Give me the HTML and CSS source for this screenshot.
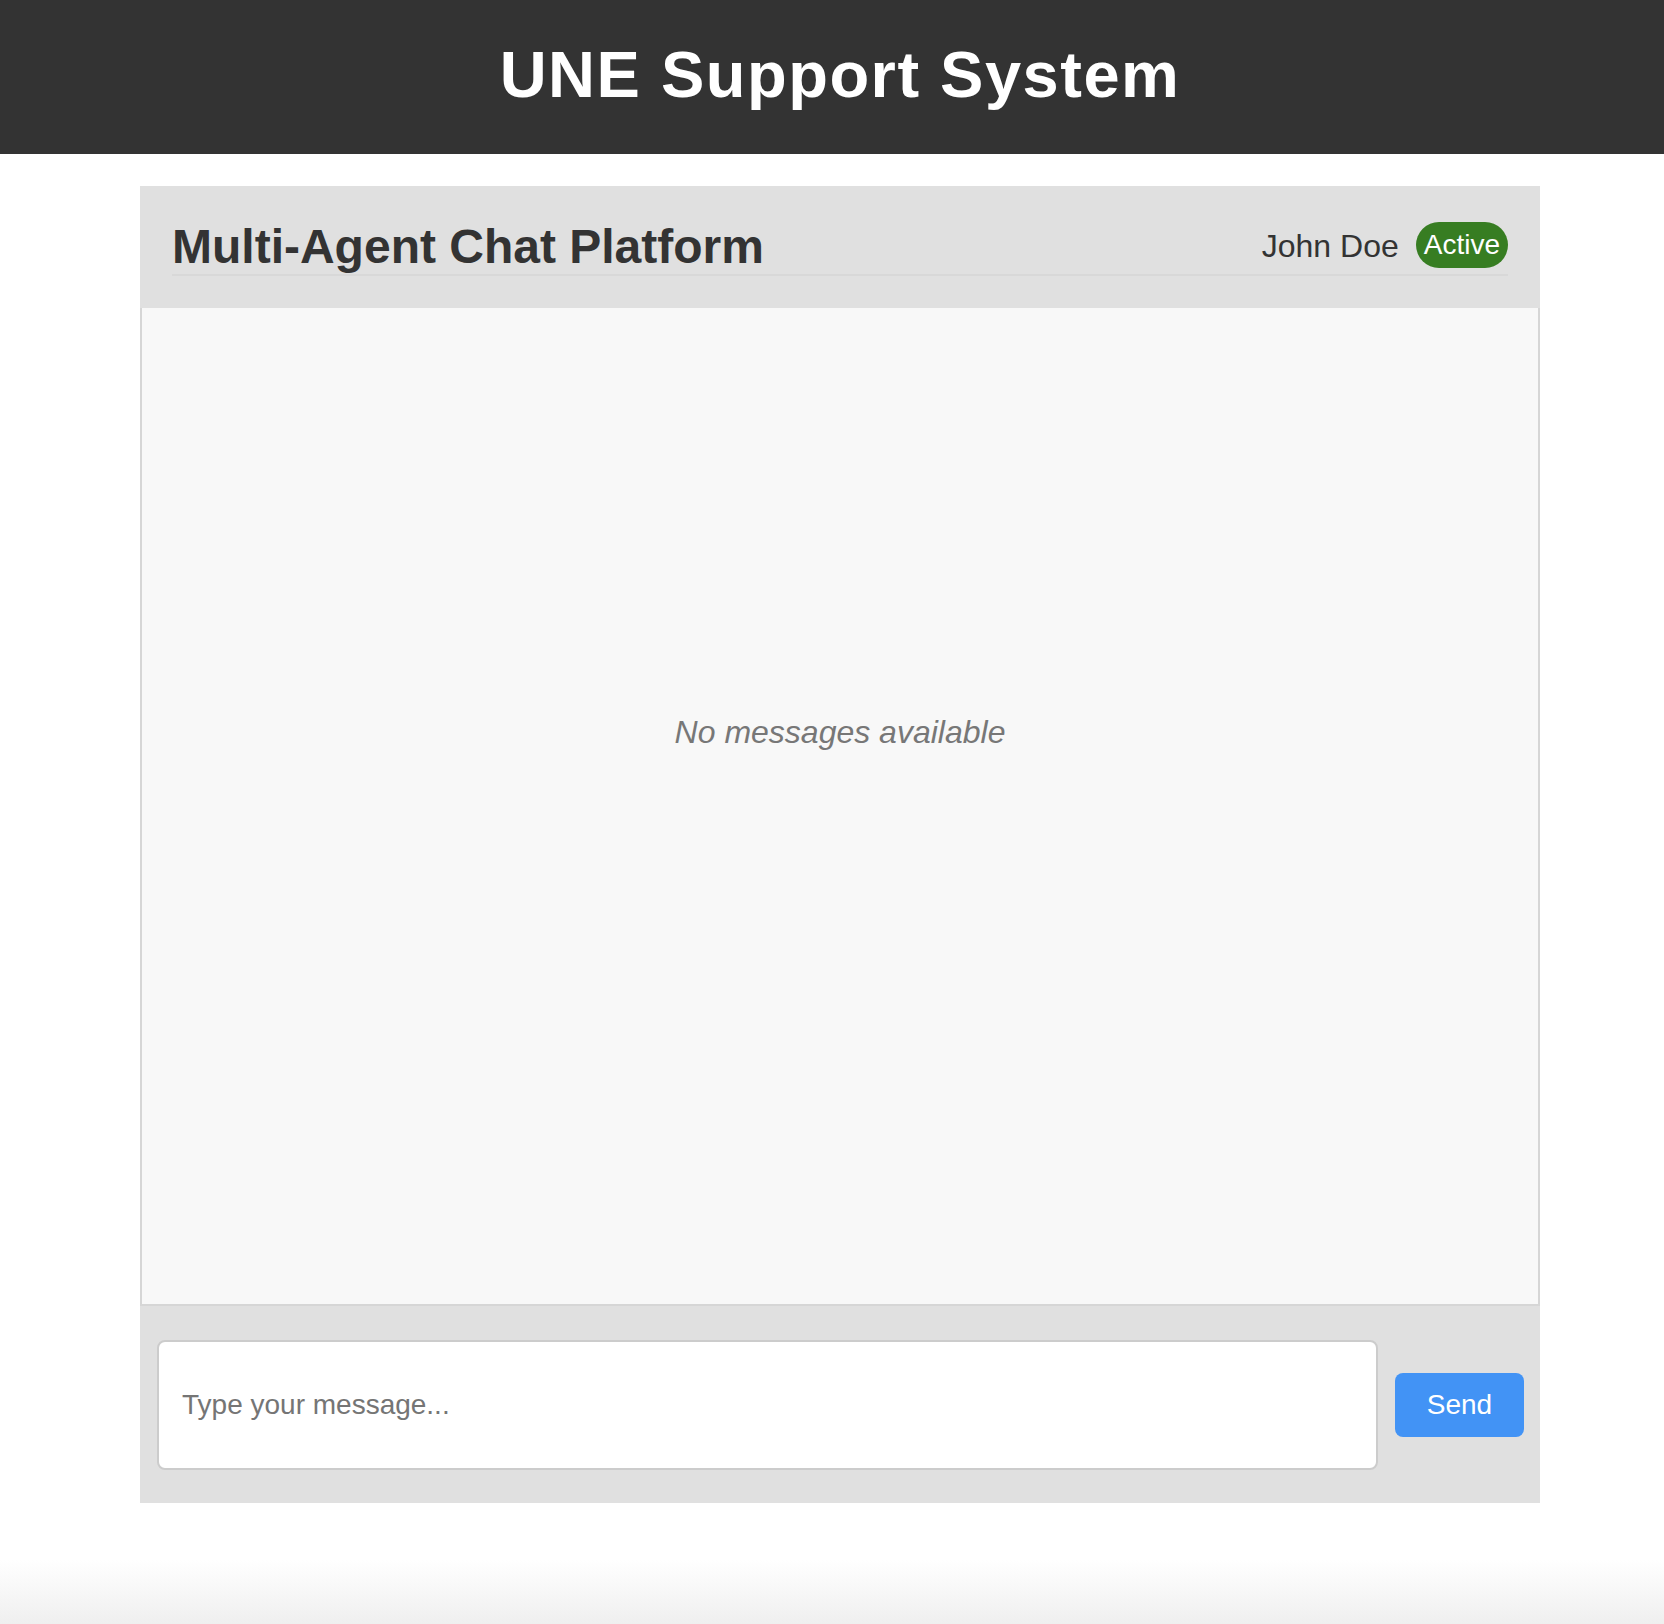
FILE: index.html
```html
<!DOCTYPE html>
<html lang="en">
<head>
<meta charset="utf-8">
<title>UNE Support System</title>
<link rel="stylesheet" href="styles.css">
</head>
<body>
<header class="site-header">
  <h1 class="site-title">UNE Support System</h1>
</header>
<main class="chat">
  <div class="chat-header">
    <div class="chat-header-row">
      <h2 class="chat-title">Multi-Agent Chat Platform</h2>
      <div class="user">
        <span class="user-name">John Doe</span>
        <span class="status">Active</span>
      </div>
    </div>
  </div>
  <section class="messages">
    <p class="empty">No messages available</p>
  </section>
  <form class="composer">
    <input class="composer-input" type="text" placeholder="Type your message...">
    <button class="send" type="button">Send</button>
  </form>
</main>
</body>
</html>
```

FILE: styles.css
```css
html {
  min-height: 100%;
  background: linear-gradient(to bottom, #ffffff 0, #ffffff 1560px, #efefef 1624px);
}
body {
  margin: 0;
  min-height: 1624px;
  font-family: "Liberation Sans", Arial, Helvetica, sans-serif;
  color: #333333;
}
.site-header {
  background: #333333;
  height: 154px;
  box-sizing: border-box;
  padding-top: 37px;
}
.site-title {
  margin: 0;
  padding-left: 16px;
  text-align: center;
  color: #ffffff;
  font-size: 65px;
  line-height: 75px;
  letter-spacing: 1.5px;
  font-weight: 700;
}
.chat {
  width: 1400px;
  margin: 32px 0 0 140px;
  background: #e0e0e0;
}
.chat-header {
  padding: 33px 32px 32px 32px;
}
.chat-header-row {
  display: flex;
  align-items: center;
  justify-content: space-between;
  border-bottom: 2px solid #d8d8d8;
}
.chat-title {
  margin: 0;
  font-size: 48px;
  line-height: 55px;
  font-weight: 700;
  color: #333333;
}
.user {
  display: flex;
  align-items: center;
  gap: 17px;
}
.user-name {
  font-size: 32px;
  color: #333333;
}
.status {
  background: #377d22;
  color: #ffffff;
  font-size: 28px;
  line-height: 32px;
  padding: 7px 8px;
  margin-bottom: 4px;
  border-radius: 23px;
}
.messages {
  height: 998px;
  box-sizing: border-box;
  background: #f8f8f8;
  border: 2px solid #d6d6d6;
  border-top: none;
  padding-top: 406px;
}
.empty {
  margin: 0;
  text-align: center;
  font-size: 32px;
  line-height: 37px;
  font-style: italic;
  color: #777777;
}
.composer {
  display: flex;
  align-items: center;
  gap: 17px;
  margin: 0;
  padding: 34px 16px 33px 17px;
}
.composer-input {
  flex: 1;
  height: 130px;
  box-sizing: border-box;
  border: 2px solid #cccccc;
  border-radius: 8px;
  background: #ffffff;
  padding: 0 23px;
  font-family: "Liberation Sans", Arial, Helvetica, sans-serif;
  font-size: 28px;
  color: #333333;
  outline: none;
}
.composer-input::placeholder {
  color: #757575;
}
.send {
  width: 129px;
  height: 64px;
  border: none;
  border-radius: 8px;
  background: #4293f5;
  color: #ffffff;
  font-family: "Liberation Sans", Arial, Helvetica, sans-serif;
  font-size: 28px;
  padding: 0;
  cursor: pointer;
}
```
